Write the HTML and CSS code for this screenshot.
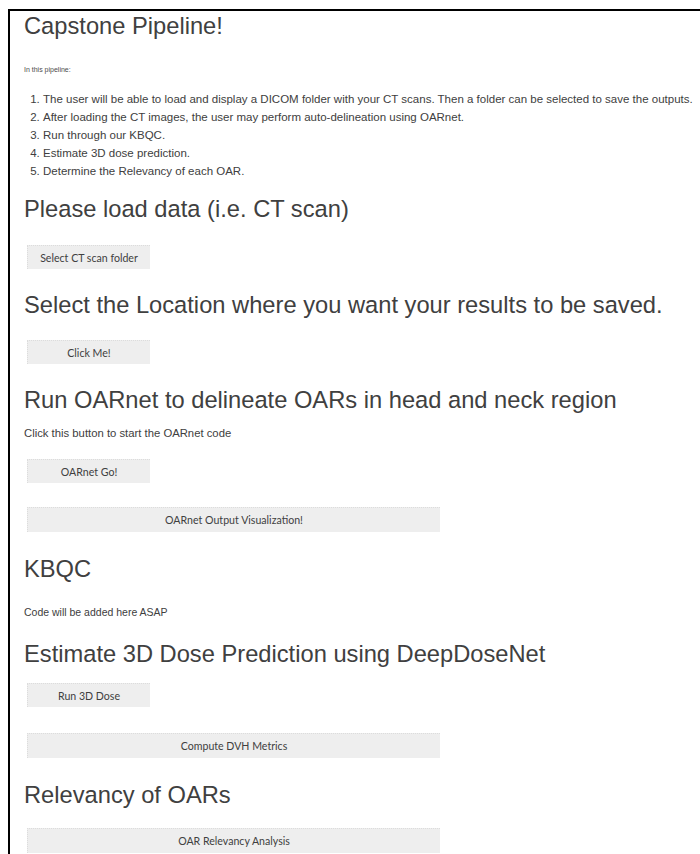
FILE: index.html
```html
<!DOCTYPE html>
<html lang="en">
<head>
<meta charset="utf-8">
<title>Capstone Pipeline</title>
<link rel="stylesheet" href="styles.css">
</head>
<body>
<main class="notebook">
  <h1 class="title">Capstone Pipeline!</h1>
  <p class="intro">In this pipeline:</p>
  <ol class="steps">
    <li>The user will be able to load and display a DICOM folder with your CT scans. Then a folder can be selected to save the outputs.</li>
    <li>After loading the CT images, the user may perform auto-delineation using OARnet.</li>
    <li>Run through our KBQC.</li>
    <li>Estimate 3D dose prediction.</li>
    <li>Determine the Relevancy of each OAR.</li>
  </ol>

  <h2 class="heading h-load">Please load data (i.e. CT scan)</h2>
  <button class="btn btn-load">Select CT scan folder</button>

  <h2 class="heading h-save">Select the Location where you want your results to be saved.</h2>
  <button class="btn btn-save">Click Me!</button>

  <h2 class="heading h-oar">Run OARnet to delineate OARs in head and neck region</h2>
  <p class="note note-oar">Click this button to start the OARnet code</p>
  <button class="btn btn-oar">OARnet Go!</button>
  <button class="btn btn-wide btn-vis">OARnet Output Visualization!</button>

  <h2 class="heading h-kbqc">KBQC</h2>
  <p class="note note-kbqc">Code will be added here ASAP</p>

  <h2 class="heading h-dose">Estimate 3D Dose Prediction using DeepDoseNet</h2>
  <button class="btn btn-dose">Run 3D Dose</button>
  <button class="btn btn-wide btn-dvh">Compute DVH Metrics</button>

  <h2 class="heading h-rel">Relevancy of OARs</h2>
  <button class="btn btn-wide btn-rel">OAR Relevancy Analysis</button>
</main>
</body>
</html>
```

FILE: styles.css
```css
html, body {
  margin: 0;
  padding: 0;
  background: #ffffff;
}

body {
  font-family: "Liberation Sans", Arial, sans-serif;
  color: #404040;
  overflow: hidden;
}

/* notebook frame: heavy rule along the top and left edge */
.notebook {
  display: flex;
  flex-direction: column;
  align-items: flex-start;
  margin: 9px 0 0 8px;
  padding: 0 0 0 14px;
  border-top: 2px solid #000;
  border-left: 2px solid #000;
  min-height: 900px;
}

.title {
  margin: 1px 0 0 0;
  font-size: 23.7px;
  line-height: 28px;
  font-weight: normal;
  color: #404040;
}

/* tiny caption; the slight opacity keeps its antialiasing grey */
.intro {
  margin: 24px 0 0 0;
  font-size: 7px;
  line-height: 12px;
  color: #4a4a4a;
  opacity: 0.99;
}

.steps {
  margin: 14px 0 0 0;
  padding: 0 0 0 19px;
  font-size: 11.5px;
  line-height: 18px;
}

.heading {
  margin: 0;
  font-size: 23.7px;
  line-height: 28px;
  font-weight: normal;
  color: #404040;
  white-space: nowrap;
}

.note {
  margin: 0;
  font-size: 11.3px;
  line-height: 12px;
}

.note-kbqc {
  font-size: 10.5px;
}

.btn {
  margin-left: 3px;
  width: 123px;
  height: 24px;
  padding: 0;
  background: #eeeeee;
  border: none;
  border-top: 1px dotted #dcdcdc;
  border-left: 1px dotted #dcdcdc;
  font-family: Lato, "Open Sans", sans-serif;
  font-size: 10.6px;
  color: #404040;
  text-align: center;
}

.btn-wide {
  width: 413px;
  height: 25px;
}

/* vertical rhythm between cells */
.h-load { margin-top: 15px; }
.btn-load { margin-top: 22px; }
.h-save { margin-top: 22px; }
.btn-save { margin-top: 21px; }
.h-oar { margin-top: 22px; }
.note-oar { margin-top: 13px; }
.btn-oar { margin-top: 20px; }
.btn-vis { margin-top: 24px; }
.h-kbqc { margin-top: 23px; }
.note-kbqc { margin-top: 23px; }
.h-dose { margin-top: 22px; }
.btn-dose { margin-top: 15px; }
.btn-dvh { margin-top: 26px; }
.h-rel { margin-top: 23px; }
.btn-rel { margin-top: 19px; }
```
